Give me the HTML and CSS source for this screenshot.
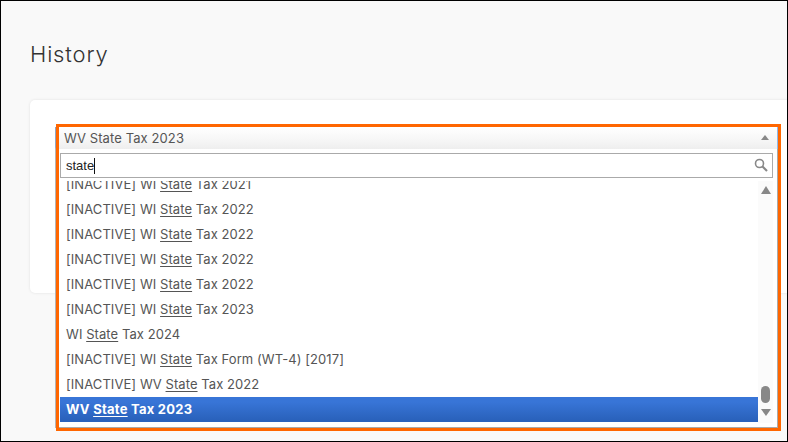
FILE: index.html
```html
<!DOCTYPE html>
<html lang="en">
<head>
<meta charset="utf-8">
<title>History</title>
<link rel="stylesheet" href="styles.css">
</head>
<body>
<div class="frame">
  <h1 class="title">History</h1>
  <section class="card"></section>
  <div class="highlight">
    <div class="select-head"><span>WV State Tax 2023</span>
      <svg class="caret" width="8" height="5" viewBox="0 0 8 5"><path d="M4 0L8 5H0z" fill="#888"/></svg>
    </div>
    <div class="drop">
      <div class="search"><span class="typed">state</span><span class="cursor"></span>
        <svg class="mag" width="14" height="14" viewBox="0 0 14 14"><circle cx="5.5" cy="5.5" r="4" fill="none" stroke="#888" stroke-width="1.6"/><path d="M8.5 8.5L13 13" stroke="#888" stroke-width="2.2"/></svg>
      </div>
      <div class="listwrap">
        <ul class="list">
          <li>[INACTIVE] WI <u>State</u> Tax 2021</li>
          <li>[INACTIVE] WI <u>State</u> Tax 2022</li>
          <li>[INACTIVE] WI <u>State</u> Tax 2022</li>
          <li>[INACTIVE] WI <u>State</u> Tax 2022</li>
          <li>[INACTIVE] WI <u>State</u> Tax 2022</li>
          <li>[INACTIVE] WI <u>State</u> Tax 2023</li>
          <li>WI <u>State</u> Tax 2024</li>
          <li>[INACTIVE] WI <u>State</u> Tax Form (WT-4) [2017]</li>
          <li>[INACTIVE] WV <u>State</u> Tax 2022</li>
          <li class="active">WV <u>State</u> Tax 2023</li>
        </ul>
        <div class="scrollbar">
          <svg width="10" height="8" viewBox="0 0 10 8"><path d="M5 0L10 8H0z" fill="#888"/></svg>
          <div class="thumb"></div>
          <svg width="10" height="7" viewBox="0 0 10 7"><path d="M0 0H10L5 7z" fill="#888"/></svg>
        </div>
      </div>
    </div>
  </div>
</div>
</body>
</html>
```
FILE: styles.css
```css
* { box-sizing: border-box; }
html, body { margin: 0; padding: 0; }
body { width: 788px; height: 442px; overflow: hidden; font-family: Inter, "Open Sans", sans-serif; }
.frame { position: relative; width: 788px; height: 442px; background: #f9f9f9; border: 1px solid #000; padding: 0 0 0 29px; overflow: hidden; }
.title { margin: 0; padding-top: 39px; height: 99px; font-size: 22px; line-height: 28px; font-weight: 300; color: #333; letter-spacing: 0.85px; }
.card { width: 780px; height: 193px; background: #fff; border-radius: 5px; box-shadow: 0 0 3px rgba(0,0,0,.1); }
.highlight { position: absolute; left: 55px; top: 123px; width: 725px; height: 307px; border: 3px solid #f60; }
.highlight::before { content: ""; position: absolute; left: -4px; top: 0; width: 1px; height: 301px; background: linear-gradient(#8fa6c4 0, #8fa6c4 20px, #b4b4b4 22px); }
.select-head { height: 22px; padding: 2px 8px 0 5px; display: flex; justify-content: space-between; font-size: 13px; line-height: 18px; letter-spacing: 0.1px; color: #555; background: linear-gradient(#fff 0, #f6f6f6 60%, #eee 100%); border-right: 1px solid #8fb8e8; }
.caret { margin-top: 6px; }
.drop { height: 279px; background: #fff; border-right: 1px solid #aaa; border-bottom: 1px solid #aaa; padding: 4px 4px 0 1px; }
.search { position: relative; height: 25px; border: 1px solid #aaa; display: flex; align-items: center; padding-left: 5px; font-family: "Liberation Sans", Arial, sans-serif; font-size: 13px; color: #222; }
.cursor { width: 1px; height: 16px; background: #111; }
.mag { position: absolute; right: 4px; top: 4px; }
.listwrap { display: flex; height: 242px; margin-top: 3px; overflow: hidden; }
.list { flex: 1; list-style: none; margin: -9px 0 0; padding: 0; }
.list li { height: 25px; line-height: 25px; padding-left: 6px; font-size: 13px; letter-spacing: 0.07px; color: #555; white-space: nowrap; }
.list u { text-underline-offset: 2px; }
.list li.active { color: #fff; font-weight: 700; letter-spacing: 0.25px; background: linear-gradient(#3875d7 20%, #2a62bc 90%); }
.scrollbar { width: 15px; background: #fbfbfb; display: flex; flex-direction: column; align-items: center; padding-top: 5px; }
.thumb { width: 9px; height: 17px; border-radius: 5px; background: #888; margin: auto 0 6px; }
.scrollbar svg:last-child { margin-bottom: 7px; }
```
